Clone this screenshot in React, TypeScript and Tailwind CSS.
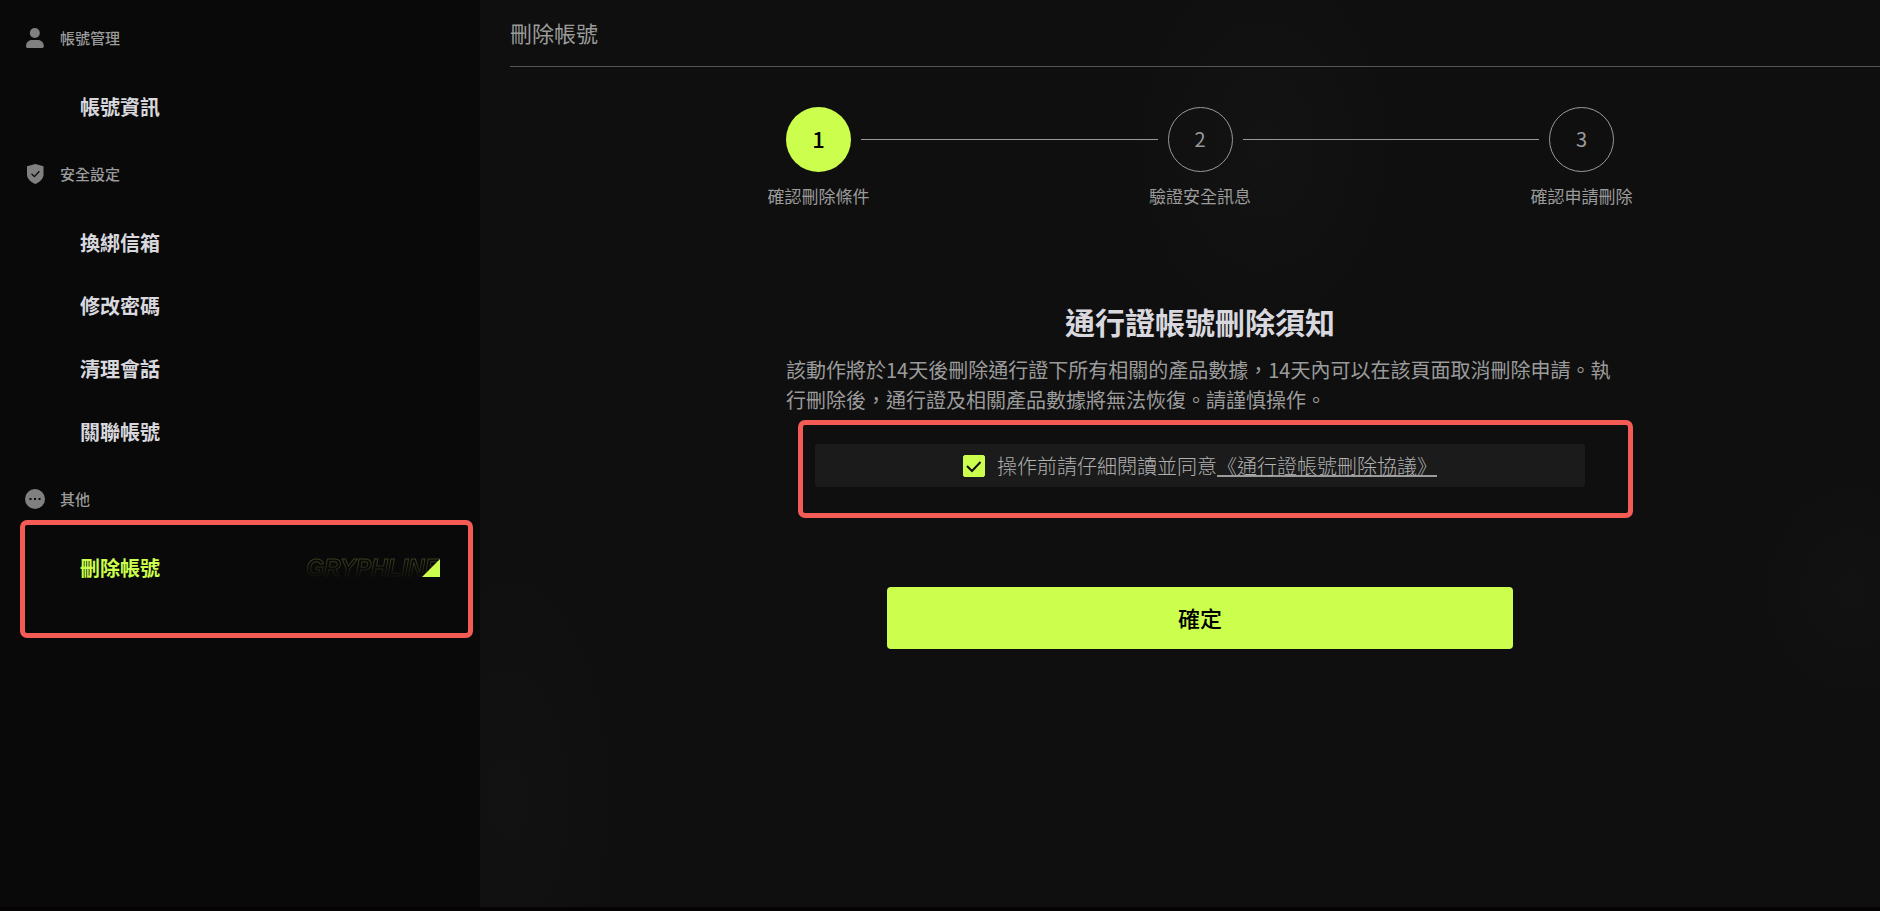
import { Fragment, ReactNode, useState } from "react";

type Section = { title: string; icon: ReactNode; items: string[] };

const PersonIcon = () => (
  <svg viewBox="0 0 20 20" className="h-5 w-5" fill="#808080" aria-hidden="true">
    <circle cx="9.8" cy="5" r="5" />
    <path d="M1 18.2C1 14.5 3.6 12 7 12h5.700C16.300 12 18.800 14.500 18.800 18.200c0 1.200-.8 1.800-2 1.800H3c-1.200 0-2-.6-2-1.800Z" />
  </svg>
);

const ShieldIcon = () => (
  <svg viewBox="0 0 20 20" className="h-5 w-5" aria-hidden="true">
    <path
      fill="#808080"
      d="M10.300 0 18.500 2.300v8.200c0 4.200-3.500 7.500-8.200 9.500C5.500 18 2 14.700 2 10.500V2.300Z"
    />
    <path d="m6.500 9.800 2.900 2.800 5-5.400" fill="none" stroke="#0a0a0a" strokeWidth="1.300" />
  </svg>
);

const DotsIcon = () => (
  <svg viewBox="0 0 20 20" className="h-5 w-5" aria-hidden="true">
    <circle cx="10" cy="10" r="10" fill="#808080" />
    <path d="M4.500 9h2v2h-2zM9 9h2v2H9zM13.500 9h2v2h-2z" fill="#0a0a0a" />
  </svg>
);

const sections: Section[] = [
  { title: "帳號管理", icon: <PersonIcon />, items: ["帳號資訊"] },
  {
    title: "安全設定",
    icon: <ShieldIcon />,
    items: ["換綁信箱", "修改密碼", "清理會話", "關聯帳號"],
  },
  { title: "其他", icon: <DotsIcon />, items: ["刪除帳號"] },
];

const steps = ["確認刪除條件", "驗證安全訊息", "確認申請刪除"];

function ActiveMark() {
  return (
    <span className="relative flex items-center" aria-hidden="true">
      <span className="text-[23px] leading-6 font-bold italic text-transparent [font-family:'Liberation_Sans',sans-serif] [-webkit-text-stroke:1px_#3a4021] [mask-image:linear-gradient(#000_20%,#0003_80%)]">
        GRYPHLINE
      </span>
      <svg viewBox="0 0 18 18" className="absolute right-0 h-[18px] w-[18px]" fill="#ccff4d">
        <path d="M18 0v18H0Z" />
      </svg>
    </span>
  );
}

function NavItem({ label, active }: { label: string; active: boolean }) {
  return (
    <li>
      <a
        href="#"
        aria-current={active ? "page" : undefined}
        className={`flex h-[63px] items-center justify-between pr-10 pl-20 text-xl font-bold ${
          active ? "text-[#ccff4d]" : "text-[#d8d8de]"
        }`}
      >
        {label}
        {active && <ActiveMark />}
      </a>
    </li>
  );
}

function Sidebar({ active }: { active: string }) {
  return (
    <nav className="relative w-[480px] shrink-0 bg-[#090909] pt-7">
      {sections.map((s) => (
        <section key={s.title} className="mb-[26px]">
          <h2 className="flex h-5 items-center gap-[15px] pl-[25px] text-[15px] font-medium text-[#9b9b9b]">
            {s.icon}
            {s.title}
          </h2>
          <ul className="pt-[27px]">
            {s.items.map((i) => (
              <NavItem key={i} label={i} active={i === active} />
            ))}
          </ul>
        </section>
      ))}
      <div className="pointer-events-none absolute top-[520px] right-[7px] left-5 h-[118px] rounded-[7px] border-5 border-[#f35b54]" />
    </nav>
  );
}

function Stepper({ current }: { current: number }) {
  return (
    <ol className="flex items-center gap-[10px] text-[#9b9b9b]">
      {steps.map((s, i) => (
        <Fragment key={s}>
          {i > 0 && <li aria-hidden="true" className="h-px flex-1 bg-[#999999]" />}
          <li className="relative flex flex-col items-center">
            <span
              className={`flex h-[65px] w-[65px] items-center justify-center rounded-full pb-[2px] ${
                i === current
                  ? "bg-[#ccff4d] text-[22px] font-medium text-black"
                  : "border border-[#999999] text-xl"
              }`}
            >
              {i + 1}
            </span>
            <span className="absolute top-[77px] text-[17px] leading-6 whitespace-nowrap">{s}</span>
          </li>
        </Fragment>
      ))}
    </ol>
  );
}

function Agreement() {
  const [checked, setChecked] = useState(true);
  return (
    <div className="relative mx-[29px] mt-[29px] flex h-[43px] items-center justify-center gap-3 rounded-[3px] bg-[#1b1b1b] text-xl text-[#9b9b9b]">
      <span className="relative flex">
        <input
          id="agree"
          type="checkbox"
          checked={checked}
          onChange={(e) => setChecked(e.target.checked)}
          className="peer h-[22px] w-[22px] appearance-none rounded-[2px] border border-[#ccff4d] checked:bg-[#ccff4d]"
        />
        <svg
          viewBox="0 0 22 22"
          className="pointer-events-none absolute inset-0 hidden peer-checked:block"
          fill="none"
          stroke="#0f0f0f"
          strokeWidth="2"
          aria-hidden="true"
        >
          <path d="m4 11 5 5 8.500-9" />
        </svg>
      </span>
      <span className="font-light leading-[30px] text-[#b0b0b0]">
        <label htmlFor="agree">操作前請仔細閱讀並同意</label>
        <a
          href="#"
          className="underline decoration-[#9b9b9b] decoration-2 underline-offset-1 [text-decoration-skip-ink:none]"
        >
          《通行證帳號刪除協議》
        </a>
      </span>
      <div className="pointer-events-none absolute -top-6 -right-12 -bottom-[31px] -left-[17px] rounded-[7px] border-5 border-[#f35b54]" />
    </div>
  );
}

export default function App() {
  return (
    <div
      lang="zh-Hant"
      className="flex min-h-screen border-b-4 border-[#050304] bg-[#0f0f0f] [font-family:'Noto_Sans_CJK_TC',sans-serif]"
    >
      <Sidebar active="刪除帳號" />
      <main className="min-w-0 flex-1 bg-[radial-gradient(ellipse_140px_200px_at_56%_16%,#131313,transparent),radial-gradient(ellipse_120px_260px_at_2%_88%,#121212,transparent),radial-gradient(ellipse_100px_120px_at_98%_65%,#121212,transparent)] pl-[30px]">
        <header className="flex h-[67px] items-center border-b border-[#565656] pb-[2px]">
          <h1 className="text-[22px] text-[#9b9b9b]">刪除帳號</h1>
        </header>
        <div className="mx-auto w-full max-w-[838px] pt-10 pl-[10px]">
          <Stepper current={0} />
          <h2 className="mt-[127px] text-center text-3xl leading-[45px] font-bold text-[#d8d8de]">
            通行證帳號刪除須知
          </h2>
          <p className="mt-[11px] text-xl leading-[30px] text-[#9b9b9b]">
            該動作將於14天後刪除通行證下所有相關的產品數據，14天內可以在該頁面取消刪除申請。執行刪除後，通行證及相關產品數據將無法恢復。請謹慎操作。
          </p>
          <Agreement />
          <button
            type="button"
            className="mx-auto mt-[100px] block h-[62px] w-full max-w-[626px] rounded bg-[#ccff4d] pb-[2px] text-[22px] font-medium text-black"
          >
            確定
          </button>
        </div>
      </main>
    </div>
  );
}
